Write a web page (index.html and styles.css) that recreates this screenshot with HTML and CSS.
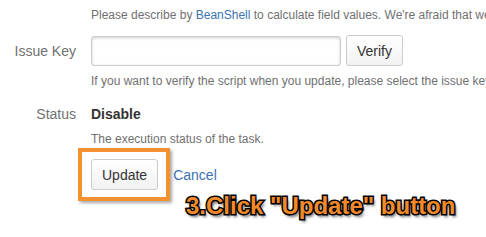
FILE: index.html
```html
<!DOCTYPE html>
<html lang="en">
<head>
    <meta charset="UTF-8">
    <title>Script Field - Edit</title>
    <link rel="stylesheet" href="styles.css">
</head>
<body>
    <form class="aui-form">
        <div class="field-group">
            <div class="field-label"></div>
            <div class="description">Please describe by <a href="#" class="link">BeanShell</a> to calculate field values. We're afraid that we cannot guarantee the behavior of the script.</div>
        </div>

        <div class="field-group issue-key">
            <label class="field-label" for="issueKey">Issue Key</label>
            <div class="field-body">
                <input type="text" class="text-input" id="issueKey">
                <button type="button" class="aui-button">Verify</button>
            </div>
        </div>
        <div class="field-group">
            <div class="field-label"></div>
            <div class="description">If you want to verify the script when you update, please select the issue key.</div>
        </div>

        <div class="field-group status">
            <div class="field-label">Status</div>
            <div class="field-value">Disable</div>
        </div>
        <div class="field-group">
            <div class="field-label"></div>
            <div class="description">The execution status of the task.</div>
        </div>

        <div class="field-group buttons">
            <div class="field-label"></div>
            <div class="button-row">
                <span class="highlight"></span>
                <button type="submit" class="aui-button">Update</button>
                <a href="#" class="link cancel">Cancel</a>
                <span class="callout">3.Click "Update" button</span>
            </div>
        </div>
    </form>
</body>
</html>
```

FILE: styles.css
```css
* {
    margin: 0;
    padding: 0;
    box-sizing: border-box;
}

body {
    font-family: 'Liberation Sans', Arial, sans-serif;
    font-size: 14px;
    color: #333333;
    background-color: #FFFFFF;
    width: 486px;
    height: 237px;
    overflow: hidden;
}

.aui-form {
    padding-top: 7px;
}

.field-group {
    display: flex;
    align-items: center;
    white-space: nowrap;
}

.field-label {
    flex: 0 0 91px;
    padding-right: 15px;
    text-align: right;
    color: #707070;
    font-size: 14px;
}

.description {
    font-size: 12px;
    line-height: 16px;
    color: #707070;
    overflow: hidden;
}

.link {
    color: #3B73AF;
    text-decoration: none;
}

.issue-key {
    margin-top: 12px;
}

.field-body {
    display: flex;
    align-items: center;
    gap: 5px;
}

.issue-key + .field-group {
    margin-top: 7px;
}

.text-input {
    width: 250px;
    height: 30px;
    border: 1px solid #CCCCCC;
    border-radius: 3px;
    box-shadow: inset 0 1px 3px #CCCCCC;
    background: #FFFFFF;
}

.aui-button {
    font-family: inherit;
    font-size: 14px;
    color: #333333;
    height: 31px;
    padding: 0 10px;
    border: 1px solid #CCCCCC;
    border-radius: 3px;
    background: linear-gradient(#FFFFFF, #F2F2F2);
}

.status {
    margin-top: 15px;
    line-height: 20px;
}

.field-value {
    font-weight: bold;
}

.status + .field-group {
    margin-top: 7px;
}

.buttons {
    margin-top: 12px;
}

.button-row {
    position: relative;
    display: flex;
    align-items: center;
    gap: 15px;
}

.cancel {
    font-size: 14px;
}

.highlight {
    position: absolute;
    left: -13px;
    top: -11px;
    width: 92px;
    height: 53px;
    border: 4px solid #F39132;
    box-shadow: 2px 2px 3px rgba(0, 0, 0, 0.35);
}

.callout {
    position: absolute;
    left: 95px;
    top: 33px;
    font-size: 24px;
    line-height: 28px;
    font-weight: bold;
    color: #F28A2A;
    -webkit-text-stroke: 3px #000000;
    paint-order: stroke fill;
    text-shadow: 2px 3px 3px rgba(0, 0, 0, 0.6);
}
```
